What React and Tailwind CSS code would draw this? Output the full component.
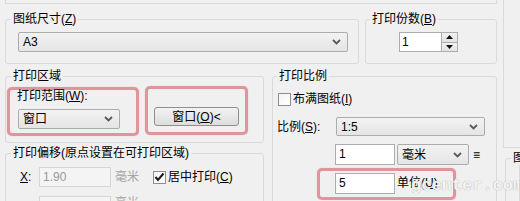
import React from 'react';

const Chevron = () => (
  <svg width="9" height="6" viewBox="0 0 9 6" className="shrink-0">
    <path d="M1 1 L4.5 4.5 L8 1" stroke="#5a5a5a" strokeWidth="1.8" fill="none" />
  </svg>
);

const Combo = ({ text, className }) => (
  <div
    className={`flex items-center justify-between border border-[#acacac] rounded-[2px] bg-gradient-to-b from-[#f2f2f2] to-[#e5e5e5] pl-[4px] pr-[6px] ${className}`}
  >
    <span className="leading-[14px]">{text}</span>
    <Chevron />
  </div>
);

const Box = ({ children }) => (
  <div className="w-[13px] h-[13px] border border-[#8e8f8f] bg-gradient-to-br from-[#f4f4f4] to-white flex items-center justify-center">
    {children}
  </div>
);

const Check = () => (
  <svg width="11" height="10" viewBox="0 0 11 10">
    <path d="M1.5 5 L4 8 L9.5 1.5" stroke="#1a1a1a" strokeWidth="2" fill="none" />
  </svg>
);

const Legend = ({ children, className }) => (
  <legend className={`px-[2px] text-[12px] leading-[14px] ${className}`}>{children}</legend>
);

const RedBox = ({ children, className }) => (
  <div className={`border-[3px] border-[#dc7680]/75 rounded-[5px] shadow-[0_0_1px_#e8a0a6] ${className}`}>{children}</div>
);

export default function App() {
  return (
    <div className="w-[520px] h-[201px] overflow-hidden bg-[#f0f0f0] flex text-[12px] text-black font-['Liberation_Sans','Noto_Sans_CJK_SC',sans-serif] relative">
      {/* main dialog area */}
      <div className="w-[503px] shrink-0 flex flex-col">
        <div className="ml-[5px] w-[492px] h-[4px] shrink-0 border-x border-b border-[#dadada]" />

        {/* paper size + copies */}
        <div className="mt-[8px] pl-[5px] flex gap-[6px] shrink-0">
          <fieldset className="w-[354px] border border-[#dadada] rounded-[3px] pb-[11px]">
            <Legend className="ml-[5px]">图纸尺寸(<u>Z</u>)</Legend>
            <Combo text="A3" className="mt-[6px] ml-[12px] w-[330px] h-[20px]" />
          </fieldset>
          <fieldset className="w-[132px] border border-[#dadada] rounded-[3px] pb-[11px]">
            <Legend className="ml-[4px]">打印份数(<u>B</u>)</Legend>
            <div className="mt-[6px] ml-[33px] flex w-[59px] h-[20px] border border-[#abadb3] bg-white">
              <span className="flex-1 pl-[2px] leading-[18px]">1</span>
              <div className="w-[16px] flex flex-col border-l border-[#abadb3]">
                <div className="flex-1 flex items-center justify-center bg-gradient-to-b from-[#f2f2f2] to-[#e3e3e3] border-b border-[#acacac]">
                  <svg width="7" height="4" viewBox="0 0 7 4"><path d="M0 4 L3.5 0 L7 4 Z" fill="#111" /></svg>
                </div>
                <div className="flex-1 flex items-center justify-center bg-gradient-to-b from-[#f2f2f2] to-[#e3e3e3]">
                  <svg width="7" height="4" viewBox="0 0 7 4"><path d="M0 0 L3.5 4 L7 0 Z" fill="#111" /></svg>
                </div>
              </div>
            </div>
          </fieldset>
        </div>

        {/* print area / offset + scale */}
        <div className="mt-[5px] pl-[5px] flex gap-[8px] shrink-0">
          <div className="w-[259px] flex flex-col">
            <fieldset className="border border-[#dadada] rounded-[3px] pb-[6px]">
              <Legend className="ml-[5px]">打印区域</Legend>
              <div className="flex items-start gap-[6px] mt-[3px] ml-[1px]">
                <RedBox className="mt-[1px] w-[132px] h-[49px] pl-[7px]">
                  <div className="leading-[14px] mt-[-1px]">打印范围(<u>W</u>):</div>
                  <Combo text="窗口" className="mt-[6px] ml-[1px] w-[102px] h-[20px]" />
                </RedBox>
                <RedBox className="w-[103px] h-[49px] pl-[6px] pt-[18px]">
                  <div className="w-[85px] h-[19px] border border-[#8f8f8f] rounded-[3px] bg-gradient-to-b from-[#f3f3f3] to-[#dddddd] flex items-center justify-center leading-[14px]">
                    窗口(<u>O</u>)&lt;
                  </div>
                </RedBox>
              </div>
            </fieldset>

            <fieldset className="mt-[3px] h-[80px] shrink-0 border border-[#dadada] rounded-[3px]">
              <Legend className="ml-[5px]">打印偏移(原点设置在可打印区域)</Legend>
              <div className="mt-[7px] ml-[14px] flex items-center">
                <span className="w-[19px] leading-[14px]"><u>X</u>:</span>
                <div className="w-[72px] h-[20px] border border-[#d6d6d6] bg-[#f4f4f4] pl-[3px] leading-[18px] text-[#9a9a9a]">1.90</div>
                <span className="ml-[4px] text-[#a5a5a5]">毫米</span>
                <div className="ml-[14px] flex items-center gap-[2px]">
                  <Box><Check /></Box>
                  <span className="leading-[14px]">居中打印(<u>C</u>)</span>
                </div>
              </div>
              <div className="mt-[9px] ml-[33px] flex items-start">
                <div className="w-[72px] h-[20px] border border-[#d6d6d6] bg-[#f4f4f4]" />
                <span className="ml-[4px] text-[#a5a5a5] leading-[14px]">毫米</span>
              </div>
            </fieldset>
          </div>

          <fieldset className="w-[225px] h-[140px] border border-[#dadada] rounded-[3px]">
            <Legend className="ml-[4px]">打印比例</Legend>
            <div className="mt-[9px] ml-[5px] flex items-center gap-[2px]">
              <Box />
              <span className="leading-[14px]">布满图纸(<u>I</u>)</span>
            </div>
            <div className="mt-[11px] ml-[4px] flex items-center">
              <span className="w-[59px] leading-[14px]">比例(<u>S</u>):</span>
              <Combo text="1:5" className="w-[149px] h-[19px]" />
            </div>
            <div className="mt-[8px] ml-[62px] flex items-center">
              <div className="w-[60px] h-[21px] border border-[#abadb3] bg-white pl-[3px] leading-[19px]">1</div>
              <Combo text="毫米" className="ml-[2px] w-[72px] h-[21px]" />
              <span className="ml-[4px] leading-[14px]">≡</span>
            </div>
            <RedBox className="mt-[3px] ml-[44px] w-[139px] h-[32px] pl-[15px] pt-[2px] flex items-start">
              <div className="w-[60px] h-[21px] border border-[#abadb3] bg-white pl-[3px] leading-[19px]">5</div>
              <span className="ml-[2px] mt-[3px] leading-[14px]">单位(<u>U</u>)</span>
            </RedBox>
          </fieldset>
        </div>
      </div>

      {/* right strip */}
      <div className="flex-1 min-w-0 flex flex-col">
        <div className="h-[148px] shrink-0 border-l border-b border-[#dadada]" />
        <fieldset className="mt-[3px] ml-[2px] h-[80px] shrink-0 border border-[#dadada] rounded-[3px] min-w-0">
          <Legend className="ml-[5px] whitespace-nowrap">图形方向</Legend>
        </fieldset>
      </div>

      {/* watermark */}
      <span className="absolute left-[411px] top-[177px] text-[17px] leading-[18px] font-['Liberation_Mono',monospace] font-bold text-white/90 [text-shadow:0_0_1px_#8a8a8a] whitespace-nowrap">
        gcenter.com
      </span>
    </div>
  );
}
